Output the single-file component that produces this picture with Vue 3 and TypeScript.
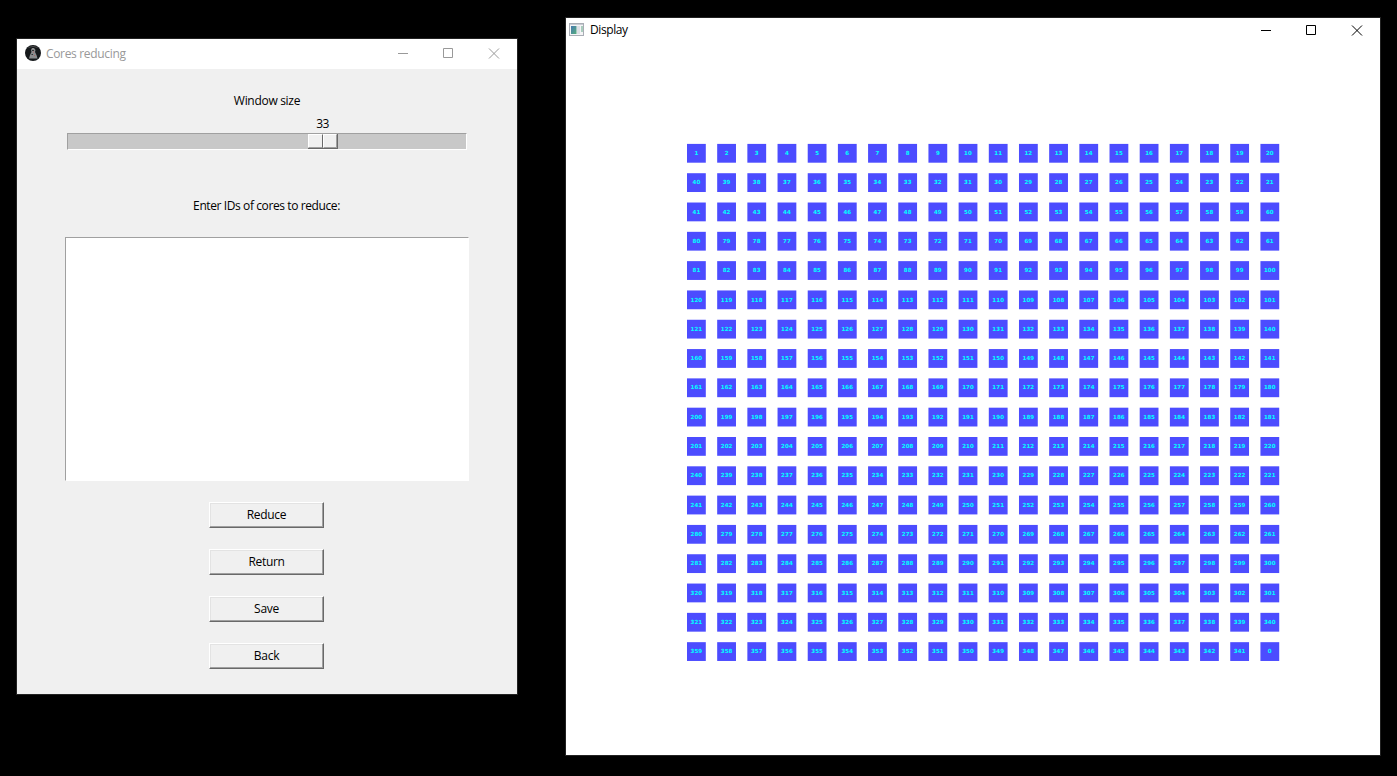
<script setup lang="ts">
import { ref } from 'vue'

interface Core {
  id: number
  x: number
  y: number
}

const columns = 20
const rows = 18
const lastId = 359

const windowSize = ref(33)
const coreIds = ref('')
const actions: string[] = ['Reduce', 'Return', 'Save', 'Back']

// Cores are numbered in a serpentine order; the slot past the last id is 0.
const cores: Core[] = []
for (let r = 0; r < rows; r++) {
  for (let c = 0; c < columns; c++) {
    const forward = r % 2 === 0
    let id = forward ? r * columns + c + 1 : (r + 1) * columns - c
    if (r === rows - 1) id = c === columns - 1 ? 0 : lastId - c
    cores.push({ id, x: 121 + c * 30.18, y: 101.9 + r * 29.31 })
  }
}
</script>

<template>
  <main class="desktop">
    <section class="window tool">
      <header class="titlebar">
        <svg class="app-icon" width="16" height="16" viewBox="0 0 16 16">
          <circle cx="8" cy="8" r="8" fill="#15181b" />
          <path d="M3.5 2.5Q8 .2 12.5 2.5" fill="none" stroke="#555" stroke-width=".8" />
          <path d="M7 3h2l1.500 2-.5 2 1.500 3 1 3.500H4l1-3.500 1.500-3L6 5z" fill="#8a8c8e" />
          <path d="M7 5h2v1H7zM6.500 9H8v1H6.500z" fill="#303336" />
          <path d="M8 6.500h1v1H8zM9 10h1v1H9z" fill="#b06464" />
        </svg>
        <span class="title">Cores reducing</span>
        <svg class="controls" width="138" height="30" viewBox="0 0 138 30" fill="none" stroke="currentColor">
          <path d="M19 14.500h10M64.500 9.500h9v9h-9z" />
          <path d="M110 9.500l10 10M120 9.500l-10 10" />
        </svg>
      </header>
      <div class="panel">
        <label class="caption size-label">Window size</label>
        <div class="scale">
          <div class="trough">
            <div class="thumb"><i></i><i></i><span class="value">{{ windowSize }}</span></div>
          </div>
        </div>
        <label class="caption ids-label">Enter IDs of cores to reduce:</label>
        <textarea v-model="coreIds" class="ids" spellcheck="false"></textarea>
        <div class="actions">
          <button v-for="a in actions" :key="a" type="button">{{ a }}</button>
        </div>
      </div>
    </section>

    <section class="window display">
      <header class="titlebar">
        <svg class="app-icon" width="16" height="16" viewBox="0 0 16 16">
          <defs>
            <linearGradient id="pane" x1="0" y1="0" x2="1" y2="1">
              <stop offset="0" stop-color="#4779b0" />
              <stop offset="1" stop-color="#55ad7c" />
            </linearGradient>
          </defs>
          <rect x=".5" y="1.500" width="14" height="12" fill="#f4f4f6" stroke="#a9adb5" />
          <path d="M1 2.500h13" stroke="#c9ccd3" />
          <rect x="2" y="4" width="5.500" height="8" fill="url(#pane)" />
          <rect x="8" y="4" width="3" height="8" fill="#dcdfe5" />
          <rect x="12" y="4" width="2" height="6" fill="#a9cdbd" />
        </svg>
        <span class="title">Display</span>
        <svg class="controls" width="138" height="25" viewBox="0 0 138 25" fill="none" stroke="currentColor">
          <path d="M19 12.500h10M64.500 7.500h9v9h-9z" />
          <path d="M110 7.500l10 10M120 7.500l-10 10" />
        </svg>
      </header>
      <svg class="plot" width="814" height="713" viewBox="0 0 814 713">
        <g v-for="(core, i) in cores" :key="i">
          <rect class="core" :x="core.x" :y="core.y" width="18.8" height="18.8" />
          <text class="core-id" :x="core.x + 9.4" :y="core.y + 11.1">{{ core.id }}</text>
        </g>
      </svg>
    </section>
  </main>
</template>

<style>
body {
  background: #000;
}
</style>

<style scoped>
.desktop {
  box-sizing: border-box;
  width: 1397px;
  height: 776px;
  display: flex;
  align-items: flex-start;
  gap: 47px;
  padding: 17px 16px 0;
  background: #000;
  color: #000;
  font: 12px/16px 'Open Sans', sans-serif;
  overflow: hidden;
}
.window {
  flex: none;
  border: 1px solid #222;
}
.tool {
  width: 500px;
  height: 655px;
  margin-top: 21px;
  background: #f0f0f0;
}
.display {
  width: 814px;
  height: 737px;
  background: #fff;
}
.titlebar {
  display: flex;
  align-items: center;
  background: #fff;
}
.tool .titlebar {
  height: 30px;
  padding-left: 8px;
  color: #999;
}
.display .titlebar {
  height: 24px;
  padding-left: 3px;
}
.app-icon {
  flex: none;
  margin-right: 5px;
}
.tool .app-icon {
  margin-top: -2px;
}
.title {
  flex: 1;
  white-space: nowrap;
}
.tool .title {
  letter-spacing: -0.33px;
}
.display .title {
  letter-spacing: -0.4px;
}
.controls {
  flex: none;
}
.panel {
  display: flex;
  flex-direction: column;
  align-items: center;
}
.caption {
  white-space: nowrap;
}
.size-label {
  margin-top: 24px;
  letter-spacing: -0.3px;
}
.scale {
  padding-top: 24px;
}
.trough {
  box-sizing: border-box;
  width: 400px;
  height: 17px;
  padding-left: 240px;
  border: 1px solid #a0a0a0;
  border-right-color: #fff;
  border-bottom-color: #fff;
  background: #c8c8c8;
}
.thumb {
  position: relative;
  box-sizing: border-box;
  display: flex;
  width: 30px;
  height: 15px;
  border-right: 1px solid #696969;
  border-bottom: 1px solid #696969;
}
.thumb i {
  box-sizing: border-box;
  flex: none;
  width: 15px;
  border: 1px solid #fff;
  border-bottom-color: #a0a0a0;
  border-right-color: #696969;
  background: #f0f0f0;
}
.thumb i:last-of-type {
  width: 14px;
  border-right-color: #a0a0a0;
}
.value {
  position: absolute;
  left: 0;
  right: 0;
  top: -18px;
  text-align: center;
  letter-spacing: -0.6px;
}
.ids-label {
  margin-top: 48px;
  margin-right: 1px;
  letter-spacing: -0.4px;
}
.ids {
  box-sizing: border-box;
  display: block;
  width: 404px;
  height: 244px;
  margin: 23px 0 0;
  border: 1px solid #a0a0a0;
  border-right-color: #fff;
  border-bottom-color: #fff;
  border-radius: 0;
  background: #fff;
  outline: none;
  resize: none;
}
.actions {
  display: grid;
  gap: 21px;
  margin-top: 21px;
  margin-right: 1px;
}
button {
  box-sizing: border-box;
  width: 115px;
  height: 26px;
  padding: 0;
  border: 1px solid #fff;
  border-right-color: #696969;
  border-bottom-color: #696969;
  border-radius: 0;
  background: #f0f0f0;
  box-shadow: inset -1px -1px #a0a0a0, inset 1px 1px #e3e3e3;
  color: #000;
  font: inherit;
  letter-spacing: -0.3px;
}
.plot {
  display: block;
}
.core {
  fill: #4c4cff;
}
.core-id {
  fill: #00ffff;
  font: bold 5.6px 'DejaVu Sans', sans-serif;
  text-anchor: middle;
}
</style>
